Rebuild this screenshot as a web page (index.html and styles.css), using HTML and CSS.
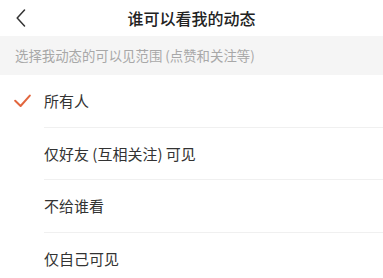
FILE: index.html
```html
<!DOCTYPE html>
<html lang="zh-CN">
<head>
<meta charset="utf-8">
<link rel="stylesheet" href="styles.css">
</head>
<body>
<div class="page">
  <header class="nav">
    <div class="nav-left">
      <svg class="back" width="10" height="18" viewBox="0 0 10 18"><path d="M8.5 1 L1.2 9 L8.5 17" fill="none" stroke="#333" stroke-width="1.5" stroke-linecap="round" stroke-linejoin="round"/></svg>
    </div>
    <div class="title">谁可以看我的动态</div>
    <div class="nav-right"></div>
  </header>
  <div class="hint">选择我动态的可以见范围 (点赞和关注等)</div>
  <ul class="options">
    <li class="option">
      <span class="mark"><svg width="17" height="14" viewBox="0 0 17 14"><path d="M1.2 6.8 L6.6 12 L15.8 1.6" fill="none" stroke="#e2663e" stroke-width="2" stroke-linecap="round" stroke-linejoin="round"/></svg></span>
      <span class="label">所有人</span>
    </li>
    <li class="option">
      <span class="mark"></span>
      <span class="label">仅好友 (互相关注) 可见</span>
    </li>
    <li class="option">
      <span class="mark"></span>
      <span class="label">不给谁看</span>
    </li>
    <li class="option">
      <span class="mark"></span>
      <span class="label">仅自己可见</span>
    </li>
  </ul>
</div>
</body>
</html>
```

FILE: styles.css
```css
html, body {
  margin: 0;
  padding: 0;
  background: #fff;
}
body {
  font-family: "Noto Sans CJK SC", "Noto Sans", sans-serif;
  color: #333;
}
.page {
  width: 383px;
  overflow: hidden;
}
.nav {
  height: 36px;
  display: grid;
  grid-template-columns: 1fr auto 1fr;
  align-items: center;
}
.nav-left {
  padding-left: 16px;
  display: flex;
  align-items: center;
}
.back {
  display: block;
}
.title {
  font-size: 16px;
  font-weight: 500;
  color: #222;
  line-height: 36px;
}
.hint {
  height: 39px;
  background: #f5f5f5;
  color: #a8a8a8;
  font-size: 13.4px;
  line-height: 39px;
  padding-left: 15px;
  white-space: nowrap;
}
.options {
  list-style: none;
  margin: 0;
  padding: 0;
}
.option {
  display: grid;
  grid-template-columns: 44px 1fr;
}
.mark {
  display: flex;
  align-items: center;
  padding-left: 14px;
  height: 51.5px;
}
.mark svg {
  display: block;
}
.label {
  height: 51.5px;
  line-height: 51.5px;
  font-size: 15px;
  color: #333;
  border-bottom: 1px solid #f0f0f0;
  white-space: nowrap;
}
```
